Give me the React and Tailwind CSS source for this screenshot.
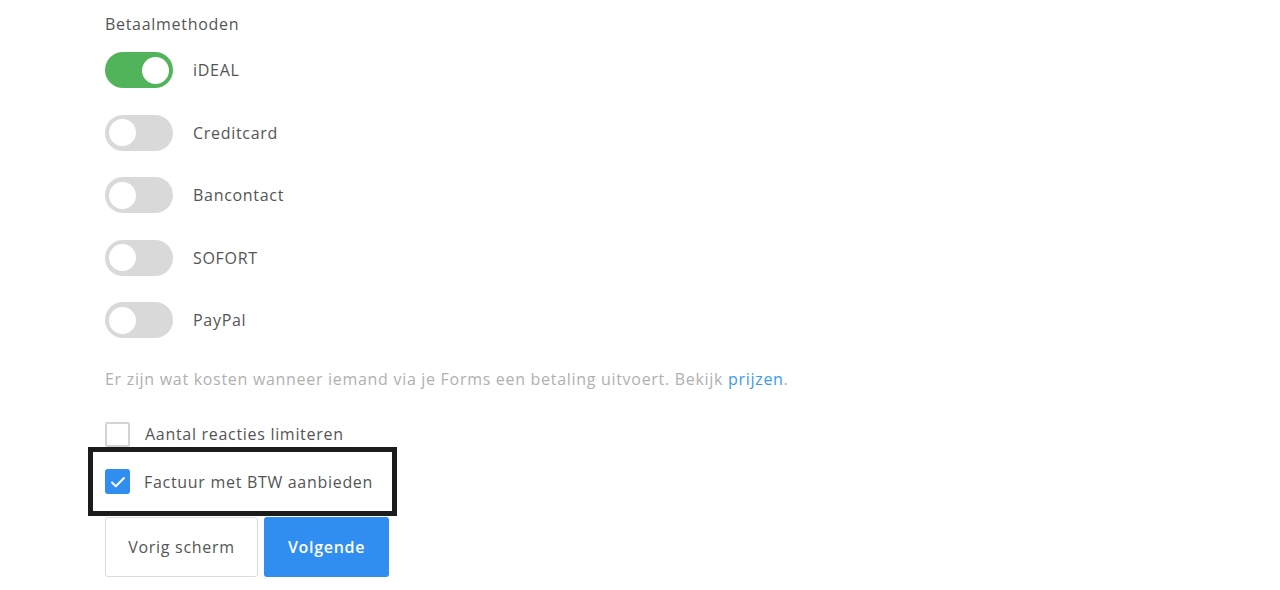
const methods = [
  { name: "iDEAL", on: true },
  { name: "Creditcard", on: false },
  { name: "Bancontact", on: false },
  { name: "SOFORT", on: false },
  { name: "PayPal", on: false },
];

const Toggle = ({ on }) => (
  <div
    className={`flex h-[36px] w-[68px] items-center rounded-full px-[4px] ${
      on ? "justify-end bg-[#52b45a]" : "justify-start bg-[#d9d9d9]"
    }`}
  >
    <span className="h-[27px] w-[27px] rounded-full bg-white" />
  </div>
);

const Checkbox = ({ checked }) =>
  checked ? (
    <span className="flex h-[25px] w-[25px] shrink-0 items-center justify-center rounded-[3px] bg-[#2f8ef0]">
      <svg width="16" height="14" viewBox="0 0 16 14" fill="none">
        <path d="M2 7.5l3.8 3.8L14 3" stroke="white" strokeWidth="2" strokeLinecap="round" strokeLinejoin="round" />
      </svg>
    </span>
  ) : (
    <span className="h-[25px] w-[25px] shrink-0 rounded-[2px] border-2 border-[#d4d4d4] bg-white" />
  );

export default function App() {
  return (
    <div
      className="min-h-[590px] bg-white pl-[105px] pt-[14px] tracking-[0.7px] text-[#555]"
      style={{ fontFamily: "'Open Sans', 'Liberation Sans', sans-serif" }}
    >
      <div className="text-[16px] leading-[20px]">Betaalmethoden</div>

      <div className="mt-[18px] flex flex-col gap-[26.5px]">
        {methods.map((m) => (
          <div key={m.name} className="flex h-[36px] items-center gap-[20px]">
            <Toggle on={m.on} />
            <span className="text-[16px]">{m.name}</span>
          </div>
        ))}
      </div>

      <p className="mt-[31px] text-[16px] leading-[20px] text-[#b0b0b0]">
        Er zijn wat kosten wanneer iemand via je Forms een betaling uitvoert. Bekijk{" "}
        <span className="text-[#3a9bf0]">prijzen</span>.
      </p>

      <label className="mt-[33px] flex h-[24px] items-center gap-[15px] text-[16px]">
        <Checkbox checked={false} />
        Aantal reacties limiteren
      </label>

      <div className="-ml-[17px] mt-[1px] flex h-[69px] w-[309px] items-center gap-[14px] border-[5px] border-[#1c1c1c] pl-[12px] text-[16px]">
        <Checkbox checked />
        Factuur met BTW aanbieden
      </div>

      <div className="mt-[1px] flex gap-[6px]">
        <button className="h-[60px] w-[153px] rounded-[3px] border border-[#dcdcdc] bg-white text-[16px] tracking-[0.7px] text-[#555]">
          Vorig scherm
        </button>
        <button className="h-[60px] w-[125px] rounded-[3px] bg-[#2f8ef0] text-[16px] font-semibold tracking-[0.7px] text-white">
          Volgende
        </button>
      </div>
    </div>
  );
}
